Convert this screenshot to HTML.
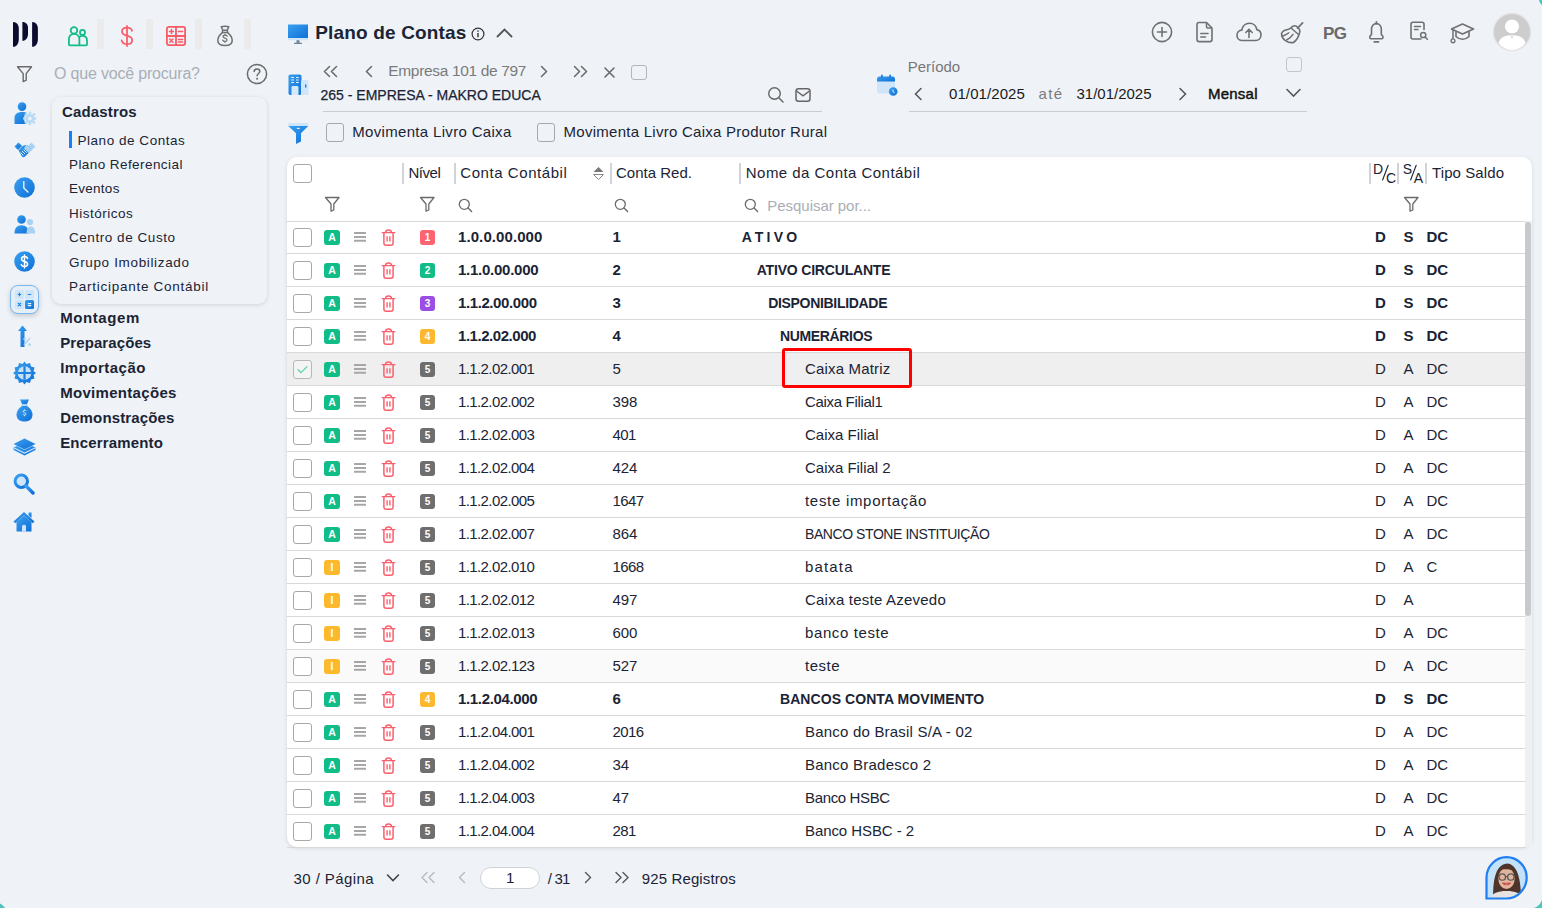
<!DOCTYPE html><html><head><meta charset="utf-8"><style>html,body{margin:0;padding:0}body{width:1542px;height:908px;position:relative;overflow:hidden;background:#eff3f8;font-family:"Liberation Sans",sans-serif;line-height:1;white-space:nowrap}</style></head><body>
<svg style="position:absolute;left:12px;top:21px;" width="27" height="27" viewBox="0 0 27 27"><g fill="#0b0a2f"><path d="M1 1 C5 1 6.8 4 6.8 8 L6.8 18 C6.8 22 5 25.8 1 25.8 Z"/><path d="M10.4 1 C14 1 16 3.5 16 7 L16 13 C16 16.5 14 19.8 10.4 19.8 Z"/><path d="M20.1 1 C24 1 25.9 4 25.9 8 L25.9 18 C25.9 22 24 25.8 20.1 25.8 Z"/></g></svg>
<div style="position:absolute;left:97px;top:19px;width:7px;height:30px;background:#ebebeb"></div>
<div style="position:absolute;left:146px;top:19px;width:7px;height:30px;background:#ebebeb"></div>
<div style="position:absolute;left:195px;top:19px;width:7px;height:30px;background:#ebebeb"></div>
<div style="position:absolute;left:244px;top:19px;width:7px;height:30px;background:#ebebeb"></div>
<svg style="position:absolute;left:66px;top:25px;" width="24" height="22" viewBox="0 0 24 22"><g fill="none" stroke="#14bd86" stroke-width="1.8" stroke-linejoin="round"><circle cx="8" cy="5.4" r="3.3"/><circle cx="16.5" cy="7.4" r="2.5"/><path d="M2.9 19.4 L2.9 14.5 C2.9 11 5 8.9 8 8.9 C11 8.9 13.4 11 13.4 14.5 L13.4 20.3 L4 20.3 C3.3 20.3 2.9 19.9 2.9 19.4 Z"/><path d="M13.4 12 C14 11 15 10.9 16.5 10.9 C19.4 10.9 21 12.7 21 15.5 L21 19.4 C21 19.9 20.6 20.3 20.1 20.3 L13.4 20.3"/></g></svg>
<svg style="position:absolute;left:117px;top:24px;" width="20" height="24" viewBox="0 0 20 24"><g fill="none" stroke="#f7606b" stroke-width="1.8" stroke-linecap="round"><path d="M10 2 L10 22"/><path d="M15 6.8 C14.6 4.8 12.8 3.6 10 3.6 C6.8 3.6 5 5.2 5 7.4 C5 9.8 7 10.8 10 11.6 C13.2 12.4 15.2 13.5 15.2 16.2 C15.2 18.6 13 20.2 10 20.2 C7 20.2 5.2 18.8 4.7 16.4"/></g></svg>
<svg style="position:absolute;left:165px;top:25px;" width="22" height="22" viewBox="0 0 22 22"><g fill="none" stroke="#f85a66" stroke-width="1.8"><rect x="1.9" y="1.9" width="18.2" height="18.2" rx="2"/><path d="M11 1.9 V20.1 M1.9 11 H20.1"/><path d="M4.5 6.4 H8.5 M6.5 4.4 V8.4 M13.4 6.4 H17.6 M13.4 14.4 H17.6 M13.4 17 H17.6 M4.8 14 L8 17.2 M8 14 L4.8 17.2" stroke-width="1.5" stroke-linecap="round"/></g></svg>
<svg style="position:absolute;left:215px;top:25px;" width="20" height="22" viewBox="0 0 20 22"><g fill="none" stroke="#6f6f6f" stroke-width="1.5" stroke-linejoin="round"><path d="M6.2 1.8 C8.5 1.2 11.5 1.2 13.8 1.8 L12.2 5.3 L7.8 5.3 Z"/><path d="M7.6 5.3 L7.4 7.6 L12.6 7.6 L12.4 5.3"/><path d="M7.4 7.6 C4.2 10 2.8 13 2.8 15.6 C2.8 19.3 5.5 20.6 10 20.6 C14.5 20.6 17.2 19.3 17.2 15.6 C17.2 13 15.8 10 12.6 7.6"/><path d="M12.2 11.2 C11.8 10.4 11 10.1 10 10.1 C8.8 10.1 8 10.7 8 11.6 C8 12.6 9 12.9 10 13.2 C11.1 13.5 12 13.9 12 14.9 C12 15.8 11.1 16.4 10 16.4 C8.9 16.4 8.1 15.9 7.8 15.2 M10 9.2 V10.1 M10 16.4 V17.3" stroke-width="1.3" stroke-linecap="round"/></g></svg>
<svg style="position:absolute;left:16px;top:65px;" width="18" height="18" viewBox="0 0 18 18"><path d="M1.5 1.8 H15.5 L10.2 8.6 V15.2 L7.2 16.6 V8.6 Z" fill="none" stroke="#6a6a6a" stroke-width="1.4" stroke-linejoin="round"/></svg>
<div style="position:absolute;left:54px;top:66.00px;font-size:16px;font-weight:400;color:#a9aeb5;letter-spacing:-0.190px;"><span>O que você procura?</span></div>
<svg style="position:absolute;left:246px;top:63px;" width="22" height="22" viewBox="0 0 22 22"><circle cx="11" cy="11" r="9.6" fill="none" stroke="#6a6a6a" stroke-width="1.5"/><path d="M8.2 8.6 C8.2 6.9 9.4 5.9 11 5.9 C12.7 5.9 13.8 6.9 13.8 8.4 C13.8 10.4 11.1 10.6 11.1 12.8" fill="none" stroke="#6a6a6a" stroke-width="1.5" stroke-linecap="round"/><circle cx="11.1" cy="15.8" r="1" fill="#6a6a6a"/></svg>
<div style="position:absolute;left:52px;top:97px;width:215px;height:207px;border-radius:9px;background:#eff3f8;box-shadow:0 1px 4px rgba(0,0,0,0.13)"></div>
<div style="position:absolute;left:62px;top:104.00px;font-size:15px;font-weight:700;color:#1b2434;letter-spacing:0.155px;"><span>Cadastros</span></div>
<div style="position:absolute;left:69px;top:131px;width:3px;height:17px;background:#1a7ef5"></div>
<div style="position:absolute;left:77.5px;top:133.50px;font-size:13.5px;font-weight:400;color:#1b2434;letter-spacing:0.534px;"><span>Plano de Contas</span></div>
<div style="position:absolute;left:69px;top:158.20px;font-size:13.5px;font-weight:400;color:#1b2434;letter-spacing:0.426px;"><span>Plano Referencial</span></div>
<div style="position:absolute;left:69px;top:182.40px;font-size:13.5px;font-weight:400;color:#1b2434;letter-spacing:0.270px;"><span>Eventos</span></div>
<div style="position:absolute;left:69px;top:206.90px;font-size:13.5px;font-weight:400;color:#1b2434;letter-spacing:0.504px;"><span>Históricos</span></div>
<div style="position:absolute;left:69px;top:231.00px;font-size:13.5px;font-weight:400;color:#1b2434;letter-spacing:0.549px;"><span>Centro de Custo</span></div>
<div style="position:absolute;left:69px;top:255.80px;font-size:13.5px;font-weight:400;color:#1b2434;letter-spacing:0.652px;"><span>Grupo Imobilizado</span></div>
<div style="position:absolute;left:69px;top:280.00px;font-size:13.5px;font-weight:400;color:#1b2434;letter-spacing:0.736px;"><span>Participante Contábil</span></div>
<div style="position:absolute;left:60.2px;top:310.20px;font-size:15px;font-weight:700;color:#1b2434;letter-spacing:0.586px;"><span>Montagem</span></div>
<div style="position:absolute;left:60.2px;top:335.30px;font-size:15px;font-weight:700;color:#1b2434;letter-spacing:0.094px;"><span>Preparações</span></div>
<div style="position:absolute;left:60.2px;top:360.00px;font-size:15px;font-weight:700;color:#1b2434;letter-spacing:0.482px;"><span>Importação</span></div>
<div style="position:absolute;left:60.2px;top:384.60px;font-size:15px;font-weight:700;color:#1b2434;letter-spacing:0.304px;"><span>Movimentações</span></div>
<div style="position:absolute;left:60.2px;top:409.70px;font-size:15px;font-weight:700;color:#1b2434;letter-spacing:0.129px;"><span>Demonstrações</span></div>
<div style="position:absolute;left:60.2px;top:434.50px;font-size:15px;font-weight:700;color:#1b2434;letter-spacing:0.166px;"><span>Encerramento</span></div>
<svg width="0" height="0" style="position:absolute"><defs><linearGradient id="bg1" x1="0" y1="0" x2="1" y2="1"><stop offset="0" stop-color="#3aa0f0"/><stop offset="1" stop-color="#0f6fd6"/></linearGradient><linearGradient id="bg2" x1="0" y1="0" x2="1" y2="1"><stop offset="0" stop-color="#cfe6fb"/><stop offset="1" stop-color="#8ec3f0"/></linearGradient></defs></svg>
<svg style="position:absolute;left:14px;top:102px;" width="22" height="23" viewBox="0 0 22 23"><circle cx="8" cy="4.6" r="4.3" fill="url(#bg1)"/><path d="M0.5 22 L0.5 16 C0.5 12 3.5 10 8 10 C10 10 11.6 10.3 12.8 11 C11 12.3 10 14.2 10 16.5 C10 18.8 11 20.8 12.6 22 Z" fill="url(#bg1)"/><rect x="14.8" y="9.6" width="2.4" height="3" transform="rotate(0 16 16.5)" fill="#b9dbf6"/><rect x="14.8" y="9.6" width="2.4" height="3" transform="rotate(45 16 16.5)" fill="#b9dbf6"/><rect x="14.8" y="9.6" width="2.4" height="3" transform="rotate(90 16 16.5)" fill="#b9dbf6"/><rect x="14.8" y="9.6" width="2.4" height="3" transform="rotate(135 16 16.5)" fill="#b9dbf6"/><rect x="14.8" y="9.6" width="2.4" height="3" transform="rotate(180 16 16.5)" fill="#b9dbf6"/><rect x="14.8" y="9.6" width="2.4" height="3" transform="rotate(225 16 16.5)" fill="#b9dbf6"/><rect x="14.8" y="9.6" width="2.4" height="3" transform="rotate(270 16 16.5)" fill="#b9dbf6"/><rect x="14.8" y="9.6" width="2.4" height="3" transform="rotate(315 16 16.5)" fill="#b9dbf6"/><circle cx="16" cy="16.5" r="4.6" fill="#b9dbf6"/><circle cx="16" cy="16.5" r="1.8" fill="#eff3f8"/></svg>
<svg style="position:absolute;left:14px;top:141px;" width="22" height="18" viewBox="0 0 22 18"><path d="M0.5 5.5 L4.5 1.5 L8 5 L4 9 Z" fill="url(#bg1)"/><path d="M17.5 1.5 L21.5 5.5 L18 9 L14 5 Z" fill="#a9d2f5"/><path d="M4.5 9.5 L8.5 5 L12 3.8 L15 5.5 L17.5 9 L11 15.5 C10 16.5 9 16.5 8 15.5 Z" fill="url(#bg1)"/><path d="M12 3.8 L15 5.5 L17.5 9 L14.5 12 L10 7.5 Z" fill="#a9d2f5"/><path d="M6.5 11.5 L9.5 14.5 M8 10 L11 13 M9.6 8.6 L12.6 11.6" stroke="#eff3f8" stroke-width="0.9"/></svg>
<svg style="position:absolute;left:14px;top:177px;" width="21" height="21" viewBox="0 0 21 21"><circle cx="10.5" cy="10.5" r="10.3" fill="url(#bg1)"/><path d="M9.8 4.6 V11 L14 15" fill="none" stroke="#eaf4fd" stroke-width="1.4" stroke-linecap="round"/></svg>
<svg style="position:absolute;left:14px;top:215px;" width="22" height="19" viewBox="0 0 22 19"><circle cx="7.5" cy="4.5" r="4.3" fill="url(#bg1)"/><path d="M0.5 18.5 C0.5 13 3 10.3 7.5 10.3 C12 10.3 14.5 13 14.5 18.5 Z" fill="url(#bg1)"/><circle cx="16" cy="7" r="3.1" fill="#a9d2f5"/><path d="M12.5 18.5 C12.5 14 13.8 11.6 16.5 11.6 C19.6 11.6 21.2 14 21.2 18.5 Z" fill="#a9d2f5"/></svg>
<svg style="position:absolute;left:14px;top:251px;" width="21" height="21" viewBox="0 0 21 21"><circle cx="10.5" cy="10.5" r="10.3" fill="url(#bg1)"/><path d="M10.5 4 V17 M13.6 7.4 C13.2 6.2 12 5.6 10.5 5.6 C8.7 5.6 7.5 6.5 7.5 7.9 C7.5 9.5 8.9 10 10.5 10.4 C12.2 10.8 13.6 11.4 13.6 13 C13.6 14.5 12.3 15.4 10.5 15.4 C8.8 15.4 7.6 14.7 7.3 13.6" fill="none" stroke="#fff" stroke-width="1.5" stroke-linecap="round"/></svg>
<div style="position:absolute;left:10px;top:285px;width:29px;height:29px;border-radius:8px;border:1.3px solid #7ab7ec;box-sizing:border-box;background:#e4eff9;box-shadow:0 2px 5px rgba(0,0,0,0.18)"></div>
<svg style="position:absolute;left:14px;top:289px;" width="21" height="21" viewBox="0 0 21 21"><rect x="1" y="1" width="9" height="9" rx="1.5" fill="#cfe5f9"/><rect x="11" y="1" width="9" height="9" rx="1.5" fill="#cfe5f9"/><rect x="1" y="11" width="9" height="9" rx="1.5" fill="#cfe5f9"/><rect x="11" y="11" width="9" height="9" rx="1.5" fill="url(#bg1)"/><path d="M3.8 5.5 H7.2 M5.5 3.8 V7.2 M13.8 5.5 H17.2 M3.9 13.9 L7.1 17.1 M7.1 13.9 L3.9 17.1 M13.8 14.6 H17.2 M13.8 16.6 H17.2" stroke="#1e80e0" stroke-width="1.2"/><path d="M13.8 14.6 H17.2 M13.8 16.6 H17.2" stroke="#e8f3fd" stroke-width="1.2"/></svg>
<svg style="position:absolute;left:16px;top:325px;" width="16" height="23" viewBox="0 0 16 23"><path d="M6.5 0.5 L11 6 L8.5 6 L8.5 22 L4.5 22 L4.5 6 L2 6 Z" fill="url(#bg1)"/><path d="M8 20 L14 13" stroke="#a9d2f5" stroke-width="1.3"/><circle cx="8.6" cy="14" r="1.3" fill="#a9d2f5"/><circle cx="13.6" cy="19.6" r="1.3" fill="#a9d2f5"/></svg>
<svg style="position:absolute;left:13px;top:361px;" width="23" height="24" viewBox="0 0 23 24"><path d="M11.5 0.5 L13.5 3 L17 2 L18 5.5 L21.5 6.5 L20.5 10 L23 12 L20.5 14 L21.5 17.5 L18 18.5 L17 22 L13.5 21 L11.5 23.5 L9.5 21 L6 22 L5 18.5 L1.5 17.5 L2.5 14 L0 12 L2.5 10 L1.5 6.5 L5 5.5 L6 2 L9.5 3 Z" fill="url(#bg1)"/><circle cx="11.5" cy="12" r="6.8" fill="#c6e1f8"/><path d="M11.5 5.2 V18.8 M4.7 12 H18.3" stroke="#1e80e0" stroke-width="2.2"/></svg>
<svg style="position:absolute;left:16px;top:399px;" width="17" height="23" viewBox="0 0 17 23"><path d="M4 0.5 L13 0.5 L11 5 L6 5 Z" fill="url(#bg1)"/><rect x="5.5" y="5" width="6" height="2" fill="#a9d2f5"/><path d="M6 7 C2 9.5 0.5 13 0.5 15.5 C0.5 20 3.5 22.5 8.5 22.5 C13.5 22.5 16.5 20 16.5 15.5 C16.5 13 15 9.5 11 7 Z" fill="url(#bg1)"/><path d="M10 12.2 C9.7 11.6 9.2 11.4 8.5 11.4 C7.7 11.4 7.1 11.8 7.1 12.5 C7.1 13.3 7.8 13.5 8.5 13.8 C9.3 14 9.9 14.3 9.9 15.1 C9.9 15.8 9.3 16.2 8.5 16.2 C7.8 16.2 7.3 15.9 7 15.3 M8.5 10.5 V11.4 M8.5 16.2 V17.2" fill="none" stroke="#e8f3fd" stroke-width="0.9"/></svg>
<svg style="position:absolute;left:13px;top:438px;" width="23" height="18" viewBox="0 0 23 18"><path d="M11.5 0.5 L22.5 6 L11.5 11.5 L0.5 6 Z" fill="url(#bg1)"/><path d="M0.5 9.5 L4 8 L11.5 12 L19 8 L22.5 9.5 L22.5 12 L11.5 17.5 L0.5 12 Z" fill="url(#bg1)"/><path d="M0.5 9.8 L11.5 15 L22.5 9.8" fill="none" stroke="#c6e1f8" stroke-width="1.2"/></svg>
<svg style="position:absolute;left:13px;top:473px;" width="22" height="22" viewBox="0 0 22 22"><circle cx="8.3" cy="8.3" r="6.2" fill="#cfe5f9" stroke="url(#bg1)" stroke-width="3"/><path d="M13 13 L20 20" stroke="url(#bg1)" stroke-width="3.4" stroke-linecap="round"/></svg>
<svg style="position:absolute;left:13px;top:511px;" width="22" height="21" viewBox="0 0 22 21"><path d="M11 1 L21.5 10.5 L19.8 12.2 L11 4.4 L2.2 12.2 L0.5 10.5 Z" fill="url(#bg1)"/><path d="M15.5 1.5 H18.5 V7 L15.5 4.5 Z" fill="url(#bg1)"/><path d="M3.5 11 L11 4.8 L18.5 11 V20.5 H3.5 Z" fill="url(#bg1)"/><path d="M9 20.5 V15.5 C9 14.5 9.8 13.8 11 13.8 C12.2 13.8 13 14.5 13 15.5 V20.5 Z" fill="#cfe5f9"/></svg>
<svg style="position:absolute;left:287px;top:23px;" width="22" height="22" viewBox="0 0 22 22"><rect x="1" y="1.5" width="20" height="13.5" fill="url(#bg1)"/><rect x="1" y="15" width="20" height="2.3" fill="#cfe5f9"/><path d="M9.5 17.3 H12.5 V19.8 H15 V21 H7 V19.8 H9.5 Z" fill="#6d8599"/></svg>
<div style="position:absolute;left:315.3px;top:23.30px;font-size:19px;font-weight:700;color:#1b2434;letter-spacing:0.153px;"><span>Plano de Contas</span></div>
<svg style="position:absolute;left:471px;top:27px;" width="14" height="14" viewBox="0 0 14 14"><circle cx="7" cy="7" r="5.9" fill="none" stroke="#333" stroke-width="1.2"/><path d="M7 6 V10.3" stroke="#333" stroke-width="1.4"/><circle cx="7" cy="4" r="0.85" fill="#333"/></svg>
<svg style="position:absolute;left:496px;top:27px;" width="17" height="12" viewBox="0 0 17 12"><path d="M1.5 9.5 L8.5 2.5 L15.5 9.5" fill="none" stroke="#555" stroke-width="1.8" stroke-linecap="round"/></svg>
<svg style="position:absolute;left:288px;top:74px;" width="21" height="22" viewBox="0 0 21 22"><rect x="0.5" y="0.5" width="13" height="20.5" rx="1.8" fill="url(#bg1)"/><rect x="13" y="6" width="7.5" height="15" rx="1.5" fill="#cfe5f9"/><path d="M3.5 13.5 C3.5 12.5 4.3 12 5.2 12 H8.8 C9.7 12 10.5 12.5 10.5 13.5 V21 H3.5 Z" fill="#d6e9fa"/><path d="M3.2 3.5 H6 M8 3.5 H10.8 M3.2 6 H6 M8 6 H10.8 M3.2 8.5 H6 M8 8.5 H10.8" stroke="#e6f2fc" stroke-width="1.2"/><rect x="17" y="10.5" width="1.4" height="3" fill="#1e80e0"/></svg>
<svg style="position:absolute;left:322px;top:65px;" width="18" height="13" viewBox="0 0 18 13"><path d="M7.5 1.5 L2.5 6.5 L7.5 11.5 M14.5 1.5 L9.5 6.5 L14.5 11.5" fill="none" stroke="#6a6a6a" stroke-width="1.5" stroke-linecap="round"/></svg>
<svg style="position:absolute;left:363px;top:65px;" width="11" height="13" viewBox="0 0 11 13"><path d="M8.5 1.5 L3.5 6.5 L8.5 11.5" fill="none" stroke="#6a6a6a" stroke-width="1.5" stroke-linecap="round"/></svg>
<div style="position:absolute;left:388.3px;top:63.00px;font-size:15.5px;font-weight:400;color:#7a7a7a;letter-spacing:-0.342px;"><span>Empresa 101 de 797</span></div>
<svg style="position:absolute;left:539px;top:65px;" width="11" height="13" viewBox="0 0 11 13"><path d="M2.5 1.5 L7.5 6.5 L2.5 11.5" fill="none" stroke="#6a6a6a" stroke-width="1.5" stroke-linecap="round"/></svg>
<svg style="position:absolute;left:572px;top:65px;" width="17" height="13" viewBox="0 0 17 13"><path d="M2.5 1.5 L7.5 6.5 L2.5 11.5 M9.5 1.5 L14.5 6.5 L9.5 11.5" fill="none" stroke="#6a6a6a" stroke-width="1.5" stroke-linecap="round"/></svg>
<svg style="position:absolute;left:603px;top:66px;" width="13" height="13" viewBox="0 0 13 13"><path d="M2 2 L11 11 M11 2 L2 11" fill="none" stroke="#6a6a6a" stroke-width="1.6" stroke-linecap="round"/></svg>
<div style="position:absolute;left:631px;top:65px;width:16px;height:15px;border:1.2px solid #b5b5b5;border-radius:3px;box-sizing:border-box"></div>
<div style="position:absolute;left:320.5px;top:88.00px;font-size:14px;font-weight:400;color:#1b2434;letter-spacing:0.005px;-webkit-text-stroke:0.25px #1b2434;"><span>265 - EMPRESA - MAKRO EDUCA</span></div>
<svg style="position:absolute;left:767px;top:86px;" width="18" height="18" viewBox="0 0 18 18"><circle cx="7.5" cy="7.5" r="5.8" fill="none" stroke="#666" stroke-width="1.4"/><path d="M11.8 11.8 L16 16" stroke="#666" stroke-width="1.5" stroke-linecap="round"/></svg>
<svg style="position:absolute;left:794px;top:86px;" width="18" height="18" viewBox="0 0 18 18"><rect x="2" y="2.8" width="14" height="12.5" rx="2.5" fill="none" stroke="#666" stroke-width="1.5"/><path d="M2.5 5 L9 9.8 L15.5 5" fill="none" stroke="#666" stroke-width="1.5"/></svg>
<div style="position:absolute;left:323px;top:111px;width:499px;height:1px;background:#c9cdd2"></div>
<svg style="position:absolute;left:287px;top:121px;" width="23" height="23" viewBox="0 0 23 23"><rect x="1.2" y="2" width="20" height="3" fill="#cfe5f9"/><path d="M1.2 5 H21.2 L14 12.3 V20.5 L9 23 V12.3 Z" fill="url(#bg1)"/><rect x="9.8" y="6.8" width="3" height="1.2" fill="#e6f2fc"/></svg>
<div style="position:absolute;left:326px;top:123px;width:18px;height:19px;border:1.3px solid #a8a8a8;border-radius:3px;box-sizing:border-box"></div>
<div style="position:absolute;left:352.2px;top:124.00px;font-size:15px;font-weight:400;color:#1b2434;letter-spacing:0.327px;"><span>Movimenta Livro Caixa</span></div>
<div style="position:absolute;left:537px;top:123px;width:18px;height:19px;border:1.3px solid #a8a8a8;border-radius:3px;box-sizing:border-box"></div>
<div style="position:absolute;left:563.6px;top:124.00px;font-size:15px;font-weight:400;color:#1b2434;letter-spacing:0.261px;"><span>Movimenta Livro Caixa Produtor Rural</span></div>
<svg style="position:absolute;left:876px;top:74px;" width="22" height="22" viewBox="0 0 22 22"><rect x="1" y="2.5" width="18" height="17" rx="2.5" fill="#cfe5f9"/><path d="M1 5 C1 3.6 2.1 2.5 3.5 2.5 H16.5 C17.9 2.5 19 3.6 19 5 V7.5 H1 Z" fill="url(#bg1)"/><rect x="5" y="0.5" width="1.8" height="4" rx="0.9" fill="#1e80e0"/><rect x="13.2" y="0.5" width="1.8" height="4" rx="0.9" fill="#1e80e0"/><circle cx="17.2" cy="17.5" r="4.3" fill="url(#bg1)"/><path d="M17 15.5 V17.7 L18.6 18.8" stroke="#fff" stroke-width="0.9" fill="none"/></svg>
<div style="position:absolute;left:907.7px;top:59.00px;font-size:15px;font-weight:400;color:#777;letter-spacing:-0.008px;"><span>Período</span></div>
<div style="position:absolute;left:1286px;top:57px;width:16px;height:15px;border:1.2px solid #c5c5c5;border-radius:3px;box-sizing:border-box"></div>
<svg style="position:absolute;left:912px;top:87px;" width="12" height="14" viewBox="0 0 12 14"><path d="M9 1.5 L3.5 7 L9 12.5" fill="none" stroke="#555" stroke-width="1.5" stroke-linecap="round"/></svg>
<div style="position:absolute;left:949px;top:86.00px;font-size:15px;font-weight:400;color:#1a1a1a;letter-spacing:0.091px;"><span>01/01/2025</span></div>
<div style="position:absolute;left:1038.6px;top:86.00px;font-size:15px;font-weight:400;color:#7a7a7a;letter-spacing:1.270px;"><span>até</span></div>
<div style="position:absolute;left:1076.5px;top:86.00px;font-size:15px;font-weight:400;color:#1a1a1a;letter-spacing:-0.009px;"><span>31/01/2025</span></div>
<svg style="position:absolute;left:1177px;top:87px;" width="12" height="14" viewBox="0 0 12 14"><path d="M3 1.5 L8.5 7 L3 12.5" fill="none" stroke="#555" stroke-width="1.5" stroke-linecap="round"/></svg>
<div style="position:absolute;left:1207.9px;top:86.00px;font-size:15px;font-weight:400;color:#111;letter-spacing:0.248px;-webkit-text-stroke:0.45px #111;"><span>Mensal</span></div>
<svg style="position:absolute;left:1285px;top:87px;" width="17" height="12" viewBox="0 0 17 12"><path d="M2 2.5 L8.5 9 L15 2.5" fill="none" stroke="#555" stroke-width="1.6" stroke-linecap="round"/></svg>
<div style="position:absolute;left:909px;top:111px;width:398px;height:1px;background:#c9cdd2"></div>
<svg style="position:absolute;left:1150px;top:20px;" width="24" height="24" viewBox="0 0 24 24"><circle cx="12" cy="12" r="9.6" fill="none" stroke="#707070" stroke-width="1.6"/><path d="M12 7.5 V16.5 M7.5 12 H16.5" stroke="#707070" stroke-width="1.6" stroke-linecap="round"/></svg>
<svg style="position:absolute;left:1194px;top:20px;" width="22" height="24" viewBox="0 0 22 24"><path d="M5 2.5 H12.5 L18 8 V19.5 C18 20.8 17 21.6 15.8 21.6 H5.2 C4 21.6 3 20.8 3 19.5 V4.6 C3 3.3 4 2.5 5 2.5 Z" fill="none" stroke="#707070" stroke-width="1.6" stroke-linejoin="round"/><path d="M12.5 2.5 V6.8 C12.5 7.5 13 8 13.7 8 H18" fill="none" stroke="#707070" stroke-width="1.5"/><path d="M6.8 13.5 H14 M6.8 17 H11.5" stroke="#707070" stroke-width="1.6" stroke-linecap="round"/></svg>
<svg style="position:absolute;left:1235px;top:20px;" width="28" height="24" viewBox="0 0 28 24"><path d="M7.5 20.5 C4 20.5 2 18 2 15.2 C2 12.3 4.2 10.2 6.8 10.1 C7.5 6.2 10.5 3.2 14.5 3.2 C18.5 3.2 21.3 6 21.8 9.6 C24.3 10 26 12.2 26 15 C26 18.1 23.8 20.5 20.6 20.5 Z" fill="none" stroke="#707070" stroke-width="1.6"/><path d="M14 17.5 V9.5 M10.8 12.5 L14 9.3 L17.2 12.5" fill="none" stroke="#707070" stroke-width="1.6" stroke-linecap="round"/></svg>
<svg style="position:absolute;left:1279px;top:20px;" width="27" height="25" viewBox="0 0 27 25"><path d="M18.6 8.2 L23.6 2.9" stroke="#707070" stroke-width="1.7" stroke-linecap="round"/><path d="M2.5 13.5 C3.2 11.2 5.5 10 9.5 9.2 C11 8.6 12.5 7.2 14 6.2 C15.5 5.4 17 5.8 18.2 7 L20.3 9.2 C21 10.2 21 11.5 20.5 13 C19.6 17 17.5 20.2 14.6 22.5 C12 23 8.5 22 6 20.3 C4 18.8 2.6 16.5 2.5 13.5 Z" fill="none" stroke="#707070" stroke-width="1.6" stroke-linejoin="round"/><path d="M11.7 7.7 L19.8 14.8" stroke="#707070" stroke-width="1.5"/><path d="M3.3 16.2 C5.5 15.5 7.8 14.5 9.8 12.8 M7.6 20 C10.2 18.6 12.5 16.6 14 14.3" fill="none" stroke="#707070" stroke-width="1.5" stroke-linecap="round"/></svg>
<div style="position:absolute;left:1323px;top:24.90px;font-size:17px;font-weight:700;color:#6a6a6a;letter-spacing:-0.562px;"><span>PG</span></div>
<svg style="position:absolute;left:1366px;top:20px;" width="22" height="25" viewBox="0 0 22 25"><path d="M5.5 14.5 V9.3 C5.5 6 7.5 3.6 10.4 3.6 C13.3 3.6 15.3 6 15.3 9.3 V14.5 L16.6 15.9 C17.5 17 17 18.8 15.6 18.8 H5.2 C3.8 18.8 3.3 17 4.2 15.9 Z" fill="none" stroke="#707070" stroke-width="1.6" stroke-linejoin="round"/><path d="M10.4 1.8 V3.6 M8.3 21.9 H12.5" stroke="#707070" stroke-width="1.7" stroke-linecap="round"/></svg>
<svg style="position:absolute;left:1408px;top:20px;" width="22" height="22" viewBox="0 0 22 22"><path d="M13.5 19 H5 C3.8 19 3 18.2 3 17 V4.2 C3 3 3.8 2.2 5 2.2 H14 C15.2 2.2 16 3 16 4.2 V10" fill="none" stroke="#707070" stroke-width="1.6"/><path d="M6.5 6.5 H12.5 M6.5 9.5 H10" stroke="#707070" stroke-width="1.5" stroke-linecap="round"/><circle cx="15.2" cy="15" r="2.6" fill="none" stroke="#707070" stroke-width="1.5"/><path d="M17.2 17 L19.3 19.2" stroke="#707070" stroke-width="1.6" stroke-linecap="round"/></svg>
<svg style="position:absolute;left:1450px;top:21px;" width="25" height="23" viewBox="0 0 25 23"><path d="M12.5 3 L23.5 8 L12.5 13 L1.5 8 Z" fill="none" stroke="#707070" stroke-width="1.6" stroke-linejoin="round"/><path d="M6 10.2 V15.5 C8 17.5 10.3 18.3 12.5 18.3 C14.7 18.3 17 17.5 19 15.5 V10.2" fill="none" stroke="#707070" stroke-width="1.6"/><path d="M3 8.6 V18" stroke="#707070" stroke-width="1.5"/><circle cx="3" cy="19.8" r="1.9" fill="none" stroke="#707070" stroke-width="1.4"/></svg>
<svg style="position:absolute;left:1492px;top:12px;" width="40" height="40" viewBox="0 0 40 40"><circle cx="20" cy="20" r="19.5" fill="#e6e6e6"/><circle cx="20" cy="20" r="18" fill="#cdcdcd"/><circle cx="20" cy="14.5" r="7" fill="#fff"/><path d="M6.5 31 C8 25.5 12.5 23.2 20 23.2 C27.5 23.2 32 25.5 33.5 31 C30.5 35.3 25.5 38 20 38 C14.5 38 9.5 35.3 6.5 31 Z" fill="#fff"/><path d="M19 23.5 L20 27.5 L21 23.5 Z" fill="#cdcdcd"/></svg>
<div style="position:absolute;left:287px;top:157px;width:1245px;height:690px;background:#fff;border-radius:10px;box-shadow:0 1px 4px rgba(0,0,0,0.12);overflow:hidden">
</div>
<div style="position:absolute;left:293px;top:164px;width:19px;height:19px;border:1.3px solid #a8a8a8;border-radius:3px;box-sizing:border-box;background:#fff"></div>
<div style="position:absolute;left:402px;top:163px;width:2px;height:21px;background:#d0d4da"></div>
<div style="position:absolute;left:454px;top:163px;width:2px;height:21px;background:#d0d4da"></div>
<div style="position:absolute;left:610px;top:163px;width:2px;height:21px;background:#d0d4da"></div>
<div style="position:absolute;left:739px;top:163px;width:2px;height:21px;background:#d0d4da"></div>
<div style="position:absolute;left:1369px;top:163px;width:2px;height:21px;background:#d0d4da"></div>
<div style="position:absolute;left:1397px;top:163px;width:2px;height:21px;background:#d0d4da"></div>
<div style="position:absolute;left:1425px;top:163px;width:2px;height:21px;background:#d0d4da"></div>
<div style="position:absolute;left:408.4px;top:165.00px;font-size:15px;font-weight:400;color:#1b2434;letter-spacing:-0.447px;"><span>Nível</span></div>
<div style="position:absolute;left:460.3px;top:165.00px;font-size:15px;font-weight:400;color:#1b2434;letter-spacing:0.559px;"><span>Conta Contábil</span></div>
<svg style="position:absolute;left:592px;top:166px;" width="13" height="15" viewBox="0 0 13 15"><path d="M6.5 1 L11.5 6 H1.5 Z" fill="#777"/><path d="M1.5 8.5 H11.5 L6.5 13.5 Z" fill="none" stroke="#888" stroke-width="1"/></svg>
<div style="position:absolute;left:616px;top:165.00px;font-size:15px;font-weight:400;color:#1b2434;letter-spacing:0.012px;"><span>Conta Red.</span></div>
<div style="position:absolute;left:745.8px;top:165.00px;font-size:15px;font-weight:400;color:#1b2434;letter-spacing:0.464px;"><span>Nome da Conta Contábil</span></div>
<div style="position:absolute;left:1432px;top:165.00px;font-size:15px;font-weight:400;color:#1b2434;letter-spacing:0.094px;"><span>Tipo Saldo</span></div>
<div style="position:absolute;left:1373px;top:162.00px;font-size:14px;font-weight:400;color:#1b2434;"><span>D</span></div>
<div style="position:absolute;left:1386px;top:171.00px;font-size:14px;font-weight:400;color:#1b2434;"><span>C</span></div>
<div style="position:absolute;left:1402.8px;top:162.00px;font-size:14px;font-weight:400;color:#1b2434;"><span>S</span></div>
<div style="position:absolute;left:1413.8px;top:171.00px;font-size:14px;font-weight:400;color:#1b2434;"><span>A</span></div>
<svg style="position:absolute;left:1380px;top:163px;" width="40" height="19" viewBox="0 0 40 19"><path d="M2.6 17 L8.2 2.2 M30.6 17 L36.2 2.2" stroke="#1b2434" stroke-width="1.1" stroke-linecap="round"/></svg>
<svg style="position:absolute;left:323.5px;top:196px;" width="17" height="17" viewBox="0 0 17 17"><path d="M1.5 1.5 H15 L9.8 8 V14 L7 15.2 V8 Z" fill="none" stroke="#6a6a6a" stroke-width="1.3" stroke-linejoin="round"/></svg>
<svg style="position:absolute;left:419px;top:196px;" width="17" height="17" viewBox="0 0 17 17"><path d="M1.5 1.5 H15 L9.8 8 V14 L7 15.2 V8 Z" fill="none" stroke="#6a6a6a" stroke-width="1.3" stroke-linejoin="round"/></svg>
<svg style="position:absolute;left:1402.5px;top:196px;" width="17" height="17" viewBox="0 0 17 17"><path d="M1.5 1.5 H15 L9.8 8 V14 L7 15.2 V8 Z" fill="none" stroke="#6a6a6a" stroke-width="1.3" stroke-linejoin="round"/></svg>
<svg style="position:absolute;left:457.5px;top:198px;" width="15" height="15" viewBox="0 0 15 15"><circle cx="6.3" cy="6.3" r="5" fill="none" stroke="#6a6a6a" stroke-width="1.3"/><path d="M10 10 L13.6 13.6" stroke="#6a6a6a" stroke-width="1.4" stroke-linecap="round"/></svg>
<svg style="position:absolute;left:613.5px;top:198px;" width="15" height="15" viewBox="0 0 15 15"><circle cx="6.3" cy="6.3" r="5" fill="none" stroke="#6a6a6a" stroke-width="1.3"/><path d="M10 10 L13.6 13.6" stroke="#6a6a6a" stroke-width="1.4" stroke-linecap="round"/></svg>
<svg style="position:absolute;left:743.5px;top:198px;" width="15" height="15" viewBox="0 0 15 15"><circle cx="6.3" cy="6.3" r="5" fill="none" stroke="#6a6a6a" stroke-width="1.3"/><path d="M10 10 L13.6 13.6" stroke="#6a6a6a" stroke-width="1.4" stroke-linecap="round"/></svg>
<div style="position:absolute;left:767.3px;top:197.80px;font-size:15px;font-weight:400;color:#a9aeb5;letter-spacing:-0.036px;"><span>Pesquisar por...</span></div>
<div style="position:absolute;left:287px;top:221px;width:1245px;height:1px;background:#d9d9d9"></div>
<div style="position:absolute;left:287px;top:253px;width:1238px;height:1px;background:#d9d9d9"></div>
<div style="position:absolute;left:293px;top:228px;width:19px;height:19px;border:1.3px solid #a8a8a8;border-radius:3px;box-sizing:border-box;background:#fff"></div>
<div style="position:absolute;left:324px;top:230px;width:16px;height:15px;border-radius:3px;background:#10bd87;color:#fff;font:700 10.5px/15px 'Liberation Sans',sans-serif;text-align:center">A</div>
<svg style="position:absolute;left:354px;top:231px;" width="12" height="12" viewBox="0 0 12 12"><path d="M0 2 H12 M0 5.9 H12 M0 9.8 H12" stroke="#a6a6a6" stroke-width="2"/></svg>
<svg style="position:absolute;left:381px;top:228.5px;" width="15" height="18" viewBox="0 0 15 18"><path d="M1.2 3.6 H13.8" stroke="#fb5f6c" stroke-width="1.4" stroke-linecap="round"/><path d="M4.4 3.4 C4.6 1.8 5.8 1 7.5 1 C9.2 1 10.4 1.8 10.6 3.4" fill="none" stroke="#fb5f6c" stroke-width="1.4"/><path d="M2.9 3.8 V14 C2.9 15.5 3.9 16.3 5.2 16.3 H9.8 C11.1 16.3 12.1 15.5 12.1 14 V3.8" fill="none" stroke="#fb5f6c" stroke-width="1.5"/><path d="M6.1 7.2 V12.4 M8.9 7.2 V12.4" stroke="#fb5f6c" stroke-width="1.4"/></svg>
<div style="position:absolute;left:420px;top:230px;width:15px;height:15px;border-radius:3px;background:#fd6370;color:#fff;font:700 10px/15px 'Liberation Sans',sans-serif;text-align:center">1</div>
<div style="position:absolute;left:458px;top:229.00px;font-size:15px;font-weight:700;color:#1b2434;letter-spacing:0.089px;"><span>1.0.0.00.000</span></div>
<div style="position:absolute;left:612.5px;top:229.00px;font-size:15px;font-weight:700;color:#1b2434;"><span>1</span></div>
<div style="position:absolute;left:741.8px;top:230.00px;font-size:14px;font-weight:700;color:#1b2434;letter-spacing:-0.304px;"><span>A T I V O</span></div>
<div style="position:absolute;left:1375px;top:229.00px;font-size:15px;font-weight:700;color:#1b2434;"><span>D</span></div>
<div style="position:absolute;left:1403.5px;top:229.00px;font-size:15px;font-weight:700;color:#1b2434;"><span>S</span></div>
<div style="position:absolute;left:1426.5px;top:229.00px;font-size:15px;font-weight:700;color:#1b2434;"><span>DC</span></div>
<div style="position:absolute;left:287px;top:286px;width:1238px;height:1px;background:#d9d9d9"></div>
<div style="position:absolute;left:293px;top:261px;width:19px;height:19px;border:1.3px solid #a8a8a8;border-radius:3px;box-sizing:border-box;background:#fff"></div>
<div style="position:absolute;left:324px;top:263px;width:16px;height:15px;border-radius:3px;background:#10bd87;color:#fff;font:700 10.5px/15px 'Liberation Sans',sans-serif;text-align:center">A</div>
<svg style="position:absolute;left:354px;top:264px;" width="12" height="12" viewBox="0 0 12 12"><path d="M0 2 H12 M0 5.9 H12 M0 9.8 H12" stroke="#a6a6a6" stroke-width="2"/></svg>
<svg style="position:absolute;left:381px;top:261.5px;" width="15" height="18" viewBox="0 0 15 18"><path d="M1.2 3.6 H13.8" stroke="#fb5f6c" stroke-width="1.4" stroke-linecap="round"/><path d="M4.4 3.4 C4.6 1.8 5.8 1 7.5 1 C9.2 1 10.4 1.8 10.6 3.4" fill="none" stroke="#fb5f6c" stroke-width="1.4"/><path d="M2.9 3.8 V14 C2.9 15.5 3.9 16.3 5.2 16.3 H9.8 C11.1 16.3 12.1 15.5 12.1 14 V3.8" fill="none" stroke="#fb5f6c" stroke-width="1.5"/><path d="M6.1 7.2 V12.4 M8.9 7.2 V12.4" stroke="#fb5f6c" stroke-width="1.4"/></svg>
<div style="position:absolute;left:420px;top:263px;width:15px;height:15px;border-radius:3px;background:#10bd87;color:#fff;font:700 10px/15px 'Liberation Sans',sans-serif;text-align:center">2</div>
<div style="position:absolute;left:458px;top:262.00px;font-size:15px;font-weight:700;color:#1b2434;letter-spacing:-0.257px;"><span>1.1.0.00.000</span></div>
<div style="position:absolute;left:612.5px;top:262.00px;font-size:15px;font-weight:700;color:#1b2434;"><span>2</span></div>
<div style="position:absolute;left:756.7px;top:263.00px;font-size:14px;font-weight:700;color:#1b2434;letter-spacing:-0.182px;"><span>ATIVO CIRCULANTE</span></div>
<div style="position:absolute;left:1375px;top:262.00px;font-size:15px;font-weight:700;color:#1b2434;"><span>D</span></div>
<div style="position:absolute;left:1403.5px;top:262.00px;font-size:15px;font-weight:700;color:#1b2434;"><span>S</span></div>
<div style="position:absolute;left:1426.5px;top:262.00px;font-size:15px;font-weight:700;color:#1b2434;"><span>DC</span></div>
<div style="position:absolute;left:287px;top:319px;width:1238px;height:1px;background:#d9d9d9"></div>
<div style="position:absolute;left:293px;top:294px;width:19px;height:19px;border:1.3px solid #a8a8a8;border-radius:3px;box-sizing:border-box;background:#fff"></div>
<div style="position:absolute;left:324px;top:296px;width:16px;height:15px;border-radius:3px;background:#10bd87;color:#fff;font:700 10.5px/15px 'Liberation Sans',sans-serif;text-align:center">A</div>
<svg style="position:absolute;left:354px;top:297px;" width="12" height="12" viewBox="0 0 12 12"><path d="M0 2 H12 M0 5.9 H12 M0 9.8 H12" stroke="#a6a6a6" stroke-width="2"/></svg>
<svg style="position:absolute;left:381px;top:294.5px;" width="15" height="18" viewBox="0 0 15 18"><path d="M1.2 3.6 H13.8" stroke="#fb5f6c" stroke-width="1.4" stroke-linecap="round"/><path d="M4.4 3.4 C4.6 1.8 5.8 1 7.5 1 C9.2 1 10.4 1.8 10.6 3.4" fill="none" stroke="#fb5f6c" stroke-width="1.4"/><path d="M2.9 3.8 V14 C2.9 15.5 3.9 16.3 5.2 16.3 H9.8 C11.1 16.3 12.1 15.5 12.1 14 V3.8" fill="none" stroke="#fb5f6c" stroke-width="1.5"/><path d="M6.1 7.2 V12.4 M8.9 7.2 V12.4" stroke="#fb5f6c" stroke-width="1.4"/></svg>
<div style="position:absolute;left:420px;top:296px;width:15px;height:15px;border-radius:3px;background:#9b4ee6;color:#fff;font:700 10px/15px 'Liberation Sans',sans-serif;text-align:center">3</div>
<div style="position:absolute;left:458px;top:295.00px;font-size:15px;font-weight:700;color:#1b2434;letter-spacing:-0.402px;"><span>1.1.2.00.000</span></div>
<div style="position:absolute;left:612.5px;top:295.00px;font-size:15px;font-weight:700;color:#1b2434;"><span>3</span></div>
<div style="position:absolute;left:768.2px;top:296.00px;font-size:14px;font-weight:700;color:#1b2434;letter-spacing:-0.313px;"><span>DISPONIBILIDADE</span></div>
<div style="position:absolute;left:1375px;top:295.00px;font-size:15px;font-weight:700;color:#1b2434;"><span>D</span></div>
<div style="position:absolute;left:1403.5px;top:295.00px;font-size:15px;font-weight:700;color:#1b2434;"><span>S</span></div>
<div style="position:absolute;left:1426.5px;top:295.00px;font-size:15px;font-weight:700;color:#1b2434;"><span>DC</span></div>
<div style="position:absolute;left:287px;top:352px;width:1238px;height:1px;background:#d9d9d9"></div>
<div style="position:absolute;left:293px;top:327px;width:19px;height:19px;border:1.3px solid #a8a8a8;border-radius:3px;box-sizing:border-box;background:#fff"></div>
<div style="position:absolute;left:324px;top:329px;width:16px;height:15px;border-radius:3px;background:#10bd87;color:#fff;font:700 10.5px/15px 'Liberation Sans',sans-serif;text-align:center">A</div>
<svg style="position:absolute;left:354px;top:330px;" width="12" height="12" viewBox="0 0 12 12"><path d="M0 2 H12 M0 5.9 H12 M0 9.8 H12" stroke="#a6a6a6" stroke-width="2"/></svg>
<svg style="position:absolute;left:381px;top:327.5px;" width="15" height="18" viewBox="0 0 15 18"><path d="M1.2 3.6 H13.8" stroke="#fb5f6c" stroke-width="1.4" stroke-linecap="round"/><path d="M4.4 3.4 C4.6 1.8 5.8 1 7.5 1 C9.2 1 10.4 1.8 10.6 3.4" fill="none" stroke="#fb5f6c" stroke-width="1.4"/><path d="M2.9 3.8 V14 C2.9 15.5 3.9 16.3 5.2 16.3 H9.8 C11.1 16.3 12.1 15.5 12.1 14 V3.8" fill="none" stroke="#fb5f6c" stroke-width="1.5"/><path d="M6.1 7.2 V12.4 M8.9 7.2 V12.4" stroke="#fb5f6c" stroke-width="1.4"/></svg>
<div style="position:absolute;left:420px;top:329px;width:15px;height:15px;border-radius:3px;background:#fcb82e;color:#fff;font:700 10px/15px 'Liberation Sans',sans-serif;text-align:center">4</div>
<div style="position:absolute;left:458px;top:328.00px;font-size:15px;font-weight:700;color:#1b2434;letter-spacing:-0.457px;"><span>1.1.2.02.000</span></div>
<div style="position:absolute;left:612.5px;top:328.00px;font-size:15px;font-weight:700;color:#1b2434;"><span>4</span></div>
<div style="position:absolute;left:780px;top:329.00px;font-size:14px;font-weight:700;color:#1b2434;letter-spacing:-0.352px;"><span>NUMERÁRIOS</span></div>
<div style="position:absolute;left:1375px;top:328.00px;font-size:15px;font-weight:700;color:#1b2434;"><span>D</span></div>
<div style="position:absolute;left:1403.5px;top:328.00px;font-size:15px;font-weight:700;color:#1b2434;"><span>S</span></div>
<div style="position:absolute;left:1426.5px;top:328.00px;font-size:15px;font-weight:700;color:#1b2434;"><span>DC</span></div>
<div style="position:absolute;left:287px;top:353px;width:1238px;height:32px;background:#efefef"></div>
<div style="position:absolute;left:287px;top:385px;width:1238px;height:1px;background:#d9d9d9"></div>
<div style="position:absolute;left:293px;top:360px;width:19px;height:19px;border:1.3px solid #b8b8b8;border-radius:3px;box-sizing:border-box;background:#f4f4f4"></div>
<svg style="position:absolute;left:296px;top:363px;" width="13" height="13" viewBox="0 0 13 13"><path d="M2 6.8 L5 9.6 L11 3.6" fill="none" stroke="#5fd0a8" stroke-width="1.3" stroke-linecap="round"/></svg>
<div style="position:absolute;left:324px;top:362px;width:16px;height:15px;border-radius:3px;background:#10bd87;color:#fff;font:700 10.5px/15px 'Liberation Sans',sans-serif;text-align:center">A</div>
<svg style="position:absolute;left:354px;top:363px;" width="12" height="12" viewBox="0 0 12 12"><path d="M0 2 H12 M0 5.9 H12 M0 9.8 H12" stroke="#a6a6a6" stroke-width="2"/></svg>
<svg style="position:absolute;left:381px;top:360.5px;" width="15" height="18" viewBox="0 0 15 18"><path d="M1.2 3.6 H13.8" stroke="#fb5f6c" stroke-width="1.4" stroke-linecap="round"/><path d="M4.4 3.4 C4.6 1.8 5.8 1 7.5 1 C9.2 1 10.4 1.8 10.6 3.4" fill="none" stroke="#fb5f6c" stroke-width="1.4"/><path d="M2.9 3.8 V14 C2.9 15.5 3.9 16.3 5.2 16.3 H9.8 C11.1 16.3 12.1 15.5 12.1 14 V3.8" fill="none" stroke="#fb5f6c" stroke-width="1.5"/><path d="M6.1 7.2 V12.4 M8.9 7.2 V12.4" stroke="#fb5f6c" stroke-width="1.4"/></svg>
<div style="position:absolute;left:420px;top:362px;width:15px;height:15px;border-radius:3px;background:#6e6e6e;color:#fff;font:700 10px/15px 'Liberation Sans',sans-serif;text-align:center">5</div>
<div style="position:absolute;left:458px;top:361.00px;font-size:15px;font-weight:400;color:#1b2434;letter-spacing:-0.600px;"><span>1.1.2.02.001</span></div>
<div style="position:absolute;left:612.5px;top:361.00px;font-size:15px;font-weight:400;color:#1b2434;"><span>5</span></div>
<div style="position:absolute;left:805px;top:361.00px;font-size:15px;font-weight:400;color:#1b2434;letter-spacing:0.176px;"><span>Caixa Matriz</span></div>
<div style="position:absolute;left:1375px;top:361.00px;font-size:15px;font-weight:400;color:#1b2434;"><span>D</span></div>
<div style="position:absolute;left:1403.5px;top:361.00px;font-size:15px;font-weight:400;color:#1b2434;"><span>A</span></div>
<div style="position:absolute;left:1426.5px;top:361.00px;font-size:15px;font-weight:400;color:#1b2434;"><span>DC</span></div>
<div style="position:absolute;left:287px;top:418px;width:1238px;height:1px;background:#d9d9d9"></div>
<div style="position:absolute;left:293px;top:393px;width:19px;height:19px;border:1.3px solid #a8a8a8;border-radius:3px;box-sizing:border-box;background:#fff"></div>
<div style="position:absolute;left:324px;top:395px;width:16px;height:15px;border-radius:3px;background:#10bd87;color:#fff;font:700 10.5px/15px 'Liberation Sans',sans-serif;text-align:center">A</div>
<svg style="position:absolute;left:354px;top:396px;" width="12" height="12" viewBox="0 0 12 12"><path d="M0 2 H12 M0 5.9 H12 M0 9.8 H12" stroke="#a6a6a6" stroke-width="2"/></svg>
<svg style="position:absolute;left:381px;top:393.5px;" width="15" height="18" viewBox="0 0 15 18"><path d="M1.2 3.6 H13.8" stroke="#fb5f6c" stroke-width="1.4" stroke-linecap="round"/><path d="M4.4 3.4 C4.6 1.8 5.8 1 7.5 1 C9.2 1 10.4 1.8 10.6 3.4" fill="none" stroke="#fb5f6c" stroke-width="1.4"/><path d="M2.9 3.8 V14 C2.9 15.5 3.9 16.3 5.2 16.3 H9.8 C11.1 16.3 12.1 15.5 12.1 14 V3.8" fill="none" stroke="#fb5f6c" stroke-width="1.5"/><path d="M6.1 7.2 V12.4 M8.9 7.2 V12.4" stroke="#fb5f6c" stroke-width="1.4"/></svg>
<div style="position:absolute;left:420px;top:395px;width:15px;height:15px;border-radius:3px;background:#6e6e6e;color:#fff;font:700 10px/15px 'Liberation Sans',sans-serif;text-align:center">5</div>
<div style="position:absolute;left:458px;top:394.00px;font-size:15px;font-weight:400;color:#1b2434;letter-spacing:-0.600px;"><span>1.1.2.02.002</span></div>
<div style="position:absolute;left:612.5px;top:394.00px;font-size:15px;font-weight:400;color:#1b2434;letter-spacing:-0.066px;"><span>398</span></div>
<div style="position:absolute;left:805px;top:394.00px;font-size:15px;font-weight:400;color:#1b2434;letter-spacing:-0.325px;"><span>Caixa Filial1</span></div>
<div style="position:absolute;left:1375px;top:394.00px;font-size:15px;font-weight:400;color:#1b2434;"><span>D</span></div>
<div style="position:absolute;left:1403.5px;top:394.00px;font-size:15px;font-weight:400;color:#1b2434;"><span>A</span></div>
<div style="position:absolute;left:1426.5px;top:394.00px;font-size:15px;font-weight:400;color:#1b2434;"><span>DC</span></div>
<div style="position:absolute;left:287px;top:451px;width:1238px;height:1px;background:#d9d9d9"></div>
<div style="position:absolute;left:293px;top:426px;width:19px;height:19px;border:1.3px solid #a8a8a8;border-radius:3px;box-sizing:border-box;background:#fff"></div>
<div style="position:absolute;left:324px;top:428px;width:16px;height:15px;border-radius:3px;background:#10bd87;color:#fff;font:700 10.5px/15px 'Liberation Sans',sans-serif;text-align:center">A</div>
<svg style="position:absolute;left:354px;top:429px;" width="12" height="12" viewBox="0 0 12 12"><path d="M0 2 H12 M0 5.9 H12 M0 9.8 H12" stroke="#a6a6a6" stroke-width="2"/></svg>
<svg style="position:absolute;left:381px;top:426.5px;" width="15" height="18" viewBox="0 0 15 18"><path d="M1.2 3.6 H13.8" stroke="#fb5f6c" stroke-width="1.4" stroke-linecap="round"/><path d="M4.4 3.4 C4.6 1.8 5.8 1 7.5 1 C9.2 1 10.4 1.8 10.6 3.4" fill="none" stroke="#fb5f6c" stroke-width="1.4"/><path d="M2.9 3.8 V14 C2.9 15.5 3.9 16.3 5.2 16.3 H9.8 C11.1 16.3 12.1 15.5 12.1 14 V3.8" fill="none" stroke="#fb5f6c" stroke-width="1.5"/><path d="M6.1 7.2 V12.4 M8.9 7.2 V12.4" stroke="#fb5f6c" stroke-width="1.4"/></svg>
<div style="position:absolute;left:420px;top:428px;width:15px;height:15px;border-radius:3px;background:#6e6e6e;color:#fff;font:700 10px/15px 'Liberation Sans',sans-serif;text-align:center">5</div>
<div style="position:absolute;left:458px;top:427.00px;font-size:15px;font-weight:400;color:#1b2434;letter-spacing:-0.600px;"><span>1.1.2.02.003</span></div>
<div style="position:absolute;left:612.5px;top:427.00px;font-size:15px;font-weight:400;color:#1b2434;letter-spacing:-0.600px;"><span>401</span></div>
<div style="position:absolute;left:805px;top:427.00px;font-size:15px;font-weight:400;color:#1b2434;letter-spacing:0.013px;"><span>Caixa Filial</span></div>
<div style="position:absolute;left:1375px;top:427.00px;font-size:15px;font-weight:400;color:#1b2434;"><span>D</span></div>
<div style="position:absolute;left:1403.5px;top:427.00px;font-size:15px;font-weight:400;color:#1b2434;"><span>A</span></div>
<div style="position:absolute;left:1426.5px;top:427.00px;font-size:15px;font-weight:400;color:#1b2434;"><span>DC</span></div>
<div style="position:absolute;left:287px;top:484px;width:1238px;height:1px;background:#d9d9d9"></div>
<div style="position:absolute;left:293px;top:459px;width:19px;height:19px;border:1.3px solid #a8a8a8;border-radius:3px;box-sizing:border-box;background:#fff"></div>
<div style="position:absolute;left:324px;top:461px;width:16px;height:15px;border-radius:3px;background:#10bd87;color:#fff;font:700 10.5px/15px 'Liberation Sans',sans-serif;text-align:center">A</div>
<svg style="position:absolute;left:354px;top:462px;" width="12" height="12" viewBox="0 0 12 12"><path d="M0 2 H12 M0 5.9 H12 M0 9.8 H12" stroke="#a6a6a6" stroke-width="2"/></svg>
<svg style="position:absolute;left:381px;top:459.5px;" width="15" height="18" viewBox="0 0 15 18"><path d="M1.2 3.6 H13.8" stroke="#fb5f6c" stroke-width="1.4" stroke-linecap="round"/><path d="M4.4 3.4 C4.6 1.8 5.8 1 7.5 1 C9.2 1 10.4 1.8 10.6 3.4" fill="none" stroke="#fb5f6c" stroke-width="1.4"/><path d="M2.9 3.8 V14 C2.9 15.5 3.9 16.3 5.2 16.3 H9.8 C11.1 16.3 12.1 15.5 12.1 14 V3.8" fill="none" stroke="#fb5f6c" stroke-width="1.5"/><path d="M6.1 7.2 V12.4 M8.9 7.2 V12.4" stroke="#fb5f6c" stroke-width="1.4"/></svg>
<div style="position:absolute;left:420px;top:461px;width:15px;height:15px;border-radius:3px;background:#6e6e6e;color:#fff;font:700 10px/15px 'Liberation Sans',sans-serif;text-align:center">5</div>
<div style="position:absolute;left:458px;top:460.00px;font-size:15px;font-weight:400;color:#1b2434;letter-spacing:-0.600px;"><span>1.1.2.02.004</span></div>
<div style="position:absolute;left:612.5px;top:460.00px;font-size:15px;font-weight:400;color:#1b2434;letter-spacing:-0.066px;"><span>424</span></div>
<div style="position:absolute;left:805px;top:460.00px;font-size:15px;font-weight:400;color:#1b2434;letter-spacing:-0.021px;"><span>Caixa Filial 2</span></div>
<div style="position:absolute;left:1375px;top:460.00px;font-size:15px;font-weight:400;color:#1b2434;"><span>D</span></div>
<div style="position:absolute;left:1403.5px;top:460.00px;font-size:15px;font-weight:400;color:#1b2434;"><span>A</span></div>
<div style="position:absolute;left:1426.5px;top:460.00px;font-size:15px;font-weight:400;color:#1b2434;"><span>DC</span></div>
<div style="position:absolute;left:287px;top:517px;width:1238px;height:1px;background:#d9d9d9"></div>
<div style="position:absolute;left:293px;top:492px;width:19px;height:19px;border:1.3px solid #a8a8a8;border-radius:3px;box-sizing:border-box;background:#fff"></div>
<div style="position:absolute;left:324px;top:494px;width:16px;height:15px;border-radius:3px;background:#10bd87;color:#fff;font:700 10.5px/15px 'Liberation Sans',sans-serif;text-align:center">A</div>
<svg style="position:absolute;left:354px;top:495px;" width="12" height="12" viewBox="0 0 12 12"><path d="M0 2 H12 M0 5.9 H12 M0 9.8 H12" stroke="#a6a6a6" stroke-width="2"/></svg>
<svg style="position:absolute;left:381px;top:492.5px;" width="15" height="18" viewBox="0 0 15 18"><path d="M1.2 3.6 H13.8" stroke="#fb5f6c" stroke-width="1.4" stroke-linecap="round"/><path d="M4.4 3.4 C4.6 1.8 5.8 1 7.5 1 C9.2 1 10.4 1.8 10.6 3.4" fill="none" stroke="#fb5f6c" stroke-width="1.4"/><path d="M2.9 3.8 V14 C2.9 15.5 3.9 16.3 5.2 16.3 H9.8 C11.1 16.3 12.1 15.5 12.1 14 V3.8" fill="none" stroke="#fb5f6c" stroke-width="1.5"/><path d="M6.1 7.2 V12.4 M8.9 7.2 V12.4" stroke="#fb5f6c" stroke-width="1.4"/></svg>
<div style="position:absolute;left:420px;top:494px;width:15px;height:15px;border-radius:3px;background:#6e6e6e;color:#fff;font:700 10px/15px 'Liberation Sans',sans-serif;text-align:center">5</div>
<div style="position:absolute;left:458px;top:493.00px;font-size:15px;font-weight:400;color:#1b2434;letter-spacing:-0.600px;"><span>1.1.2.02.005</span></div>
<div style="position:absolute;left:612.5px;top:493.00px;font-size:15px;font-weight:400;color:#1b2434;letter-spacing:-0.600px;"><span>1647</span></div>
<div style="position:absolute;left:805px;top:493.00px;font-size:15px;font-weight:400;color:#1b2434;letter-spacing:0.701px;"><span>teste importação</span></div>
<div style="position:absolute;left:1375px;top:493.00px;font-size:15px;font-weight:400;color:#1b2434;"><span>D</span></div>
<div style="position:absolute;left:1403.5px;top:493.00px;font-size:15px;font-weight:400;color:#1b2434;"><span>A</span></div>
<div style="position:absolute;left:1426.5px;top:493.00px;font-size:15px;font-weight:400;color:#1b2434;"><span>DC</span></div>
<div style="position:absolute;left:287px;top:550px;width:1238px;height:1px;background:#d9d9d9"></div>
<div style="position:absolute;left:293px;top:525px;width:19px;height:19px;border:1.3px solid #a8a8a8;border-radius:3px;box-sizing:border-box;background:#fff"></div>
<div style="position:absolute;left:324px;top:527px;width:16px;height:15px;border-radius:3px;background:#10bd87;color:#fff;font:700 10.5px/15px 'Liberation Sans',sans-serif;text-align:center">A</div>
<svg style="position:absolute;left:354px;top:528px;" width="12" height="12" viewBox="0 0 12 12"><path d="M0 2 H12 M0 5.9 H12 M0 9.8 H12" stroke="#a6a6a6" stroke-width="2"/></svg>
<svg style="position:absolute;left:381px;top:525.5px;" width="15" height="18" viewBox="0 0 15 18"><path d="M1.2 3.6 H13.8" stroke="#fb5f6c" stroke-width="1.4" stroke-linecap="round"/><path d="M4.4 3.4 C4.6 1.8 5.8 1 7.5 1 C9.2 1 10.4 1.8 10.6 3.4" fill="none" stroke="#fb5f6c" stroke-width="1.4"/><path d="M2.9 3.8 V14 C2.9 15.5 3.9 16.3 5.2 16.3 H9.8 C11.1 16.3 12.1 15.5 12.1 14 V3.8" fill="none" stroke="#fb5f6c" stroke-width="1.5"/><path d="M6.1 7.2 V12.4 M8.9 7.2 V12.4" stroke="#fb5f6c" stroke-width="1.4"/></svg>
<div style="position:absolute;left:420px;top:527px;width:15px;height:15px;border-radius:3px;background:#6e6e6e;color:#fff;font:700 10px/15px 'Liberation Sans',sans-serif;text-align:center">5</div>
<div style="position:absolute;left:458px;top:526.00px;font-size:15px;font-weight:400;color:#1b2434;letter-spacing:-0.600px;"><span>1.1.2.02.007</span></div>
<div style="position:absolute;left:612.5px;top:526.00px;font-size:15px;font-weight:400;color:#1b2434;letter-spacing:-0.066px;"><span>864</span></div>
<div style="position:absolute;left:805px;top:527.00px;font-size:14px;font-weight:400;color:#1b2434;letter-spacing:-0.428px;"><span>BANCO STONE INSTITUIÇÃO</span></div>
<div style="position:absolute;left:1375px;top:526.00px;font-size:15px;font-weight:400;color:#1b2434;"><span>D</span></div>
<div style="position:absolute;left:1403.5px;top:526.00px;font-size:15px;font-weight:400;color:#1b2434;"><span>A</span></div>
<div style="position:absolute;left:1426.5px;top:526.00px;font-size:15px;font-weight:400;color:#1b2434;"><span>DC</span></div>
<div style="position:absolute;left:287px;top:583px;width:1238px;height:1px;background:#d9d9d9"></div>
<div style="position:absolute;left:293px;top:558px;width:19px;height:19px;border:1.3px solid #a8a8a8;border-radius:3px;box-sizing:border-box;background:#fff"></div>
<div style="position:absolute;left:324px;top:560px;width:16px;height:15px;border-radius:3px;background:#fdb92c;color:#fff;font:700 10.5px/15px 'Liberation Sans',sans-serif;text-align:center">I</div>
<svg style="position:absolute;left:354px;top:561px;" width="12" height="12" viewBox="0 0 12 12"><path d="M0 2 H12 M0 5.9 H12 M0 9.8 H12" stroke="#a6a6a6" stroke-width="2"/></svg>
<svg style="position:absolute;left:381px;top:558.5px;" width="15" height="18" viewBox="0 0 15 18"><path d="M1.2 3.6 H13.8" stroke="#fb5f6c" stroke-width="1.4" stroke-linecap="round"/><path d="M4.4 3.4 C4.6 1.8 5.8 1 7.5 1 C9.2 1 10.4 1.8 10.6 3.4" fill="none" stroke="#fb5f6c" stroke-width="1.4"/><path d="M2.9 3.8 V14 C2.9 15.5 3.9 16.3 5.2 16.3 H9.8 C11.1 16.3 12.1 15.5 12.1 14 V3.8" fill="none" stroke="#fb5f6c" stroke-width="1.5"/><path d="M6.1 7.2 V12.4 M8.9 7.2 V12.4" stroke="#fb5f6c" stroke-width="1.4"/></svg>
<div style="position:absolute;left:420px;top:560px;width:15px;height:15px;border-radius:3px;background:#6e6e6e;color:#fff;font:700 10px/15px 'Liberation Sans',sans-serif;text-align:center">5</div>
<div style="position:absolute;left:458px;top:559.00px;font-size:15px;font-weight:400;color:#1b2434;letter-spacing:-0.600px;"><span>1.1.2.02.010</span></div>
<div style="position:absolute;left:612.5px;top:559.00px;font-size:15px;font-weight:400;color:#1b2434;letter-spacing:-0.600px;"><span>1668</span></div>
<div style="position:absolute;left:805px;top:559.00px;font-size:15px;font-weight:400;color:#1b2434;letter-spacing:1.156px;"><span>batata</span></div>
<div style="position:absolute;left:1375px;top:559.00px;font-size:15px;font-weight:400;color:#1b2434;"><span>D</span></div>
<div style="position:absolute;left:1403.5px;top:559.00px;font-size:15px;font-weight:400;color:#1b2434;"><span>A</span></div>
<div style="position:absolute;left:1426.5px;top:559.00px;font-size:15px;font-weight:400;color:#1b2434;"><span>C</span></div>
<div style="position:absolute;left:287px;top:616px;width:1238px;height:1px;background:#d9d9d9"></div>
<div style="position:absolute;left:293px;top:591px;width:19px;height:19px;border:1.3px solid #a8a8a8;border-radius:3px;box-sizing:border-box;background:#fff"></div>
<div style="position:absolute;left:324px;top:593px;width:16px;height:15px;border-radius:3px;background:#fdb92c;color:#fff;font:700 10.5px/15px 'Liberation Sans',sans-serif;text-align:center">I</div>
<svg style="position:absolute;left:354px;top:594px;" width="12" height="12" viewBox="0 0 12 12"><path d="M0 2 H12 M0 5.9 H12 M0 9.8 H12" stroke="#a6a6a6" stroke-width="2"/></svg>
<svg style="position:absolute;left:381px;top:591.5px;" width="15" height="18" viewBox="0 0 15 18"><path d="M1.2 3.6 H13.8" stroke="#fb5f6c" stroke-width="1.4" stroke-linecap="round"/><path d="M4.4 3.4 C4.6 1.8 5.8 1 7.5 1 C9.2 1 10.4 1.8 10.6 3.4" fill="none" stroke="#fb5f6c" stroke-width="1.4"/><path d="M2.9 3.8 V14 C2.9 15.5 3.9 16.3 5.2 16.3 H9.8 C11.1 16.3 12.1 15.5 12.1 14 V3.8" fill="none" stroke="#fb5f6c" stroke-width="1.5"/><path d="M6.1 7.2 V12.4 M8.9 7.2 V12.4" stroke="#fb5f6c" stroke-width="1.4"/></svg>
<div style="position:absolute;left:420px;top:593px;width:15px;height:15px;border-radius:3px;background:#6e6e6e;color:#fff;font:700 10px/15px 'Liberation Sans',sans-serif;text-align:center">5</div>
<div style="position:absolute;left:458px;top:592.00px;font-size:15px;font-weight:400;color:#1b2434;letter-spacing:-0.600px;"><span>1.1.2.02.012</span></div>
<div style="position:absolute;left:612.5px;top:592.00px;font-size:15px;font-weight:400;color:#1b2434;letter-spacing:-0.066px;"><span>497</span></div>
<div style="position:absolute;left:805px;top:592.00px;font-size:15px;font-weight:400;color:#1b2434;letter-spacing:0.224px;"><span>Caixa teste Azevedo</span></div>
<div style="position:absolute;left:1375px;top:592.00px;font-size:15px;font-weight:400;color:#1b2434;"><span>D</span></div>
<div style="position:absolute;left:1403.5px;top:592.00px;font-size:15px;font-weight:400;color:#1b2434;"><span>A</span></div>
<div style="position:absolute;left:287px;top:649px;width:1238px;height:1px;background:#d9d9d9"></div>
<div style="position:absolute;left:293px;top:624px;width:19px;height:19px;border:1.3px solid #a8a8a8;border-radius:3px;box-sizing:border-box;background:#fff"></div>
<div style="position:absolute;left:324px;top:626px;width:16px;height:15px;border-radius:3px;background:#fdb92c;color:#fff;font:700 10.5px/15px 'Liberation Sans',sans-serif;text-align:center">I</div>
<svg style="position:absolute;left:354px;top:627px;" width="12" height="12" viewBox="0 0 12 12"><path d="M0 2 H12 M0 5.9 H12 M0 9.8 H12" stroke="#a6a6a6" stroke-width="2"/></svg>
<svg style="position:absolute;left:381px;top:624.5px;" width="15" height="18" viewBox="0 0 15 18"><path d="M1.2 3.6 H13.8" stroke="#fb5f6c" stroke-width="1.4" stroke-linecap="round"/><path d="M4.4 3.4 C4.6 1.8 5.8 1 7.5 1 C9.2 1 10.4 1.8 10.6 3.4" fill="none" stroke="#fb5f6c" stroke-width="1.4"/><path d="M2.9 3.8 V14 C2.9 15.5 3.9 16.3 5.2 16.3 H9.8 C11.1 16.3 12.1 15.5 12.1 14 V3.8" fill="none" stroke="#fb5f6c" stroke-width="1.5"/><path d="M6.1 7.2 V12.4 M8.9 7.2 V12.4" stroke="#fb5f6c" stroke-width="1.4"/></svg>
<div style="position:absolute;left:420px;top:626px;width:15px;height:15px;border-radius:3px;background:#6e6e6e;color:#fff;font:700 10px/15px 'Liberation Sans',sans-serif;text-align:center">5</div>
<div style="position:absolute;left:458px;top:625.00px;font-size:15px;font-weight:400;color:#1b2434;letter-spacing:-0.600px;"><span>1.1.2.02.013</span></div>
<div style="position:absolute;left:612.5px;top:625.00px;font-size:15px;font-weight:400;color:#1b2434;letter-spacing:-0.066px;"><span>600</span></div>
<div style="position:absolute;left:805px;top:625.00px;font-size:15px;font-weight:400;color:#1b2434;letter-spacing:0.604px;"><span>banco teste</span></div>
<div style="position:absolute;left:1375px;top:625.00px;font-size:15px;font-weight:400;color:#1b2434;"><span>D</span></div>
<div style="position:absolute;left:1403.5px;top:625.00px;font-size:15px;font-weight:400;color:#1b2434;"><span>A</span></div>
<div style="position:absolute;left:1426.5px;top:625.00px;font-size:15px;font-weight:400;color:#1b2434;"><span>DC</span></div>
<div style="position:absolute;left:287px;top:650px;width:1238px;height:32px;background:#fafafa"></div>
<div style="position:absolute;left:287px;top:682px;width:1238px;height:1px;background:#d9d9d9"></div>
<div style="position:absolute;left:293px;top:657px;width:19px;height:19px;border:1.3px solid #a8a8a8;border-radius:3px;box-sizing:border-box;background:#fff"></div>
<div style="position:absolute;left:324px;top:659px;width:16px;height:15px;border-radius:3px;background:#fdb92c;color:#fff;font:700 10.5px/15px 'Liberation Sans',sans-serif;text-align:center">I</div>
<svg style="position:absolute;left:354px;top:660px;" width="12" height="12" viewBox="0 0 12 12"><path d="M0 2 H12 M0 5.9 H12 M0 9.8 H12" stroke="#a6a6a6" stroke-width="2"/></svg>
<svg style="position:absolute;left:381px;top:657.5px;" width="15" height="18" viewBox="0 0 15 18"><path d="M1.2 3.6 H13.8" stroke="#fb5f6c" stroke-width="1.4" stroke-linecap="round"/><path d="M4.4 3.4 C4.6 1.8 5.8 1 7.5 1 C9.2 1 10.4 1.8 10.6 3.4" fill="none" stroke="#fb5f6c" stroke-width="1.4"/><path d="M2.9 3.8 V14 C2.9 15.5 3.9 16.3 5.2 16.3 H9.8 C11.1 16.3 12.1 15.5 12.1 14 V3.8" fill="none" stroke="#fb5f6c" stroke-width="1.5"/><path d="M6.1 7.2 V12.4 M8.9 7.2 V12.4" stroke="#fb5f6c" stroke-width="1.4"/></svg>
<div style="position:absolute;left:420px;top:659px;width:15px;height:15px;border-radius:3px;background:#6e6e6e;color:#fff;font:700 10px/15px 'Liberation Sans',sans-serif;text-align:center">5</div>
<div style="position:absolute;left:458px;top:658.00px;font-size:15px;font-weight:400;color:#1b2434;letter-spacing:-0.600px;"><span>1.1.2.02.123</span></div>
<div style="position:absolute;left:612.5px;top:658.00px;font-size:15px;font-weight:400;color:#1b2434;letter-spacing:-0.066px;"><span>527</span></div>
<div style="position:absolute;left:805px;top:658.00px;font-size:15px;font-weight:400;color:#1b2434;letter-spacing:0.517px;"><span>teste</span></div>
<div style="position:absolute;left:1375px;top:658.00px;font-size:15px;font-weight:400;color:#1b2434;"><span>D</span></div>
<div style="position:absolute;left:1403.5px;top:658.00px;font-size:15px;font-weight:400;color:#1b2434;"><span>A</span></div>
<div style="position:absolute;left:1426.5px;top:658.00px;font-size:15px;font-weight:400;color:#1b2434;"><span>DC</span></div>
<div style="position:absolute;left:287px;top:715px;width:1238px;height:1px;background:#d9d9d9"></div>
<div style="position:absolute;left:293px;top:690px;width:19px;height:19px;border:1.3px solid #a8a8a8;border-radius:3px;box-sizing:border-box;background:#fff"></div>
<div style="position:absolute;left:324px;top:692px;width:16px;height:15px;border-radius:3px;background:#10bd87;color:#fff;font:700 10.5px/15px 'Liberation Sans',sans-serif;text-align:center">A</div>
<svg style="position:absolute;left:354px;top:693px;" width="12" height="12" viewBox="0 0 12 12"><path d="M0 2 H12 M0 5.9 H12 M0 9.8 H12" stroke="#a6a6a6" stroke-width="2"/></svg>
<svg style="position:absolute;left:381px;top:690.5px;" width="15" height="18" viewBox="0 0 15 18"><path d="M1.2 3.6 H13.8" stroke="#fb5f6c" stroke-width="1.4" stroke-linecap="round"/><path d="M4.4 3.4 C4.6 1.8 5.8 1 7.5 1 C9.2 1 10.4 1.8 10.6 3.4" fill="none" stroke="#fb5f6c" stroke-width="1.4"/><path d="M2.9 3.8 V14 C2.9 15.5 3.9 16.3 5.2 16.3 H9.8 C11.1 16.3 12.1 15.5 12.1 14 V3.8" fill="none" stroke="#fb5f6c" stroke-width="1.5"/><path d="M6.1 7.2 V12.4 M8.9 7.2 V12.4" stroke="#fb5f6c" stroke-width="1.4"/></svg>
<div style="position:absolute;left:420px;top:692px;width:15px;height:15px;border-radius:3px;background:#fcb82e;color:#fff;font:700 10px/15px 'Liberation Sans',sans-serif;text-align:center">4</div>
<div style="position:absolute;left:458px;top:691.00px;font-size:15px;font-weight:700;color:#1b2434;letter-spacing:-0.338px;"><span>1.1.2.04.000</span></div>
<div style="position:absolute;left:612.5px;top:691.00px;font-size:15px;font-weight:700;color:#1b2434;"><span>6</span></div>
<div style="position:absolute;left:780px;top:692.00px;font-size:14px;font-weight:700;color:#1b2434;letter-spacing:0.069px;"><span>BANCOS CONTA MOVIMENTO</span></div>
<div style="position:absolute;left:1375px;top:691.00px;font-size:15px;font-weight:700;color:#1b2434;"><span>D</span></div>
<div style="position:absolute;left:1403.5px;top:691.00px;font-size:15px;font-weight:700;color:#1b2434;"><span>S</span></div>
<div style="position:absolute;left:1426.5px;top:691.00px;font-size:15px;font-weight:700;color:#1b2434;"><span>DC</span></div>
<div style="position:absolute;left:287px;top:748px;width:1238px;height:1px;background:#d9d9d9"></div>
<div style="position:absolute;left:293px;top:723px;width:19px;height:19px;border:1.3px solid #a8a8a8;border-radius:3px;box-sizing:border-box;background:#fff"></div>
<div style="position:absolute;left:324px;top:725px;width:16px;height:15px;border-radius:3px;background:#10bd87;color:#fff;font:700 10.5px/15px 'Liberation Sans',sans-serif;text-align:center">A</div>
<svg style="position:absolute;left:354px;top:726px;" width="12" height="12" viewBox="0 0 12 12"><path d="M0 2 H12 M0 5.9 H12 M0 9.8 H12" stroke="#a6a6a6" stroke-width="2"/></svg>
<svg style="position:absolute;left:381px;top:723.5px;" width="15" height="18" viewBox="0 0 15 18"><path d="M1.2 3.6 H13.8" stroke="#fb5f6c" stroke-width="1.4" stroke-linecap="round"/><path d="M4.4 3.4 C4.6 1.8 5.8 1 7.5 1 C9.2 1 10.4 1.8 10.6 3.4" fill="none" stroke="#fb5f6c" stroke-width="1.4"/><path d="M2.9 3.8 V14 C2.9 15.5 3.9 16.3 5.2 16.3 H9.8 C11.1 16.3 12.1 15.5 12.1 14 V3.8" fill="none" stroke="#fb5f6c" stroke-width="1.5"/><path d="M6.1 7.2 V12.4 M8.9 7.2 V12.4" stroke="#fb5f6c" stroke-width="1.4"/></svg>
<div style="position:absolute;left:420px;top:725px;width:15px;height:15px;border-radius:3px;background:#6e6e6e;color:#fff;font:700 10px/15px 'Liberation Sans',sans-serif;text-align:center">5</div>
<div style="position:absolute;left:458px;top:724.00px;font-size:15px;font-weight:400;color:#1b2434;letter-spacing:-0.600px;"><span>1.1.2.04.001</span></div>
<div style="position:absolute;left:612.5px;top:724.00px;font-size:15px;font-weight:400;color:#1b2434;letter-spacing:-0.600px;"><span>2016</span></div>
<div style="position:absolute;left:805px;top:724.00px;font-size:15px;font-weight:400;color:#1b2434;letter-spacing:0.205px;"><span>Banco do Brasil S/A - 02</span></div>
<div style="position:absolute;left:1375px;top:724.00px;font-size:15px;font-weight:400;color:#1b2434;"><span>D</span></div>
<div style="position:absolute;left:1403.5px;top:724.00px;font-size:15px;font-weight:400;color:#1b2434;"><span>A</span></div>
<div style="position:absolute;left:1426.5px;top:724.00px;font-size:15px;font-weight:400;color:#1b2434;"><span>DC</span></div>
<div style="position:absolute;left:287px;top:781px;width:1238px;height:1px;background:#d9d9d9"></div>
<div style="position:absolute;left:293px;top:756px;width:19px;height:19px;border:1.3px solid #a8a8a8;border-radius:3px;box-sizing:border-box;background:#fff"></div>
<div style="position:absolute;left:324px;top:758px;width:16px;height:15px;border-radius:3px;background:#10bd87;color:#fff;font:700 10.5px/15px 'Liberation Sans',sans-serif;text-align:center">A</div>
<svg style="position:absolute;left:354px;top:759px;" width="12" height="12" viewBox="0 0 12 12"><path d="M0 2 H12 M0 5.9 H12 M0 9.8 H12" stroke="#a6a6a6" stroke-width="2"/></svg>
<svg style="position:absolute;left:381px;top:756.5px;" width="15" height="18" viewBox="0 0 15 18"><path d="M1.2 3.6 H13.8" stroke="#fb5f6c" stroke-width="1.4" stroke-linecap="round"/><path d="M4.4 3.4 C4.6 1.8 5.8 1 7.5 1 C9.2 1 10.4 1.8 10.6 3.4" fill="none" stroke="#fb5f6c" stroke-width="1.4"/><path d="M2.9 3.8 V14 C2.9 15.5 3.9 16.3 5.2 16.3 H9.8 C11.1 16.3 12.1 15.5 12.1 14 V3.8" fill="none" stroke="#fb5f6c" stroke-width="1.5"/><path d="M6.1 7.2 V12.4 M8.9 7.2 V12.4" stroke="#fb5f6c" stroke-width="1.4"/></svg>
<div style="position:absolute;left:420px;top:758px;width:15px;height:15px;border-radius:3px;background:#6e6e6e;color:#fff;font:700 10px/15px 'Liberation Sans',sans-serif;text-align:center">5</div>
<div style="position:absolute;left:458px;top:757.00px;font-size:15px;font-weight:400;color:#1b2434;letter-spacing:-0.600px;"><span>1.1.2.04.002</span></div>
<div style="position:absolute;left:612.5px;top:757.00px;font-size:15px;font-weight:400;color:#1b2434;letter-spacing:-0.087px;"><span>34</span></div>
<div style="position:absolute;left:805px;top:757.00px;font-size:15px;font-weight:400;color:#1b2434;letter-spacing:0.228px;"><span>Banco Bradesco 2</span></div>
<div style="position:absolute;left:1375px;top:757.00px;font-size:15px;font-weight:400;color:#1b2434;"><span>D</span></div>
<div style="position:absolute;left:1403.5px;top:757.00px;font-size:15px;font-weight:400;color:#1b2434;"><span>A</span></div>
<div style="position:absolute;left:1426.5px;top:757.00px;font-size:15px;font-weight:400;color:#1b2434;"><span>DC</span></div>
<div style="position:absolute;left:287px;top:814px;width:1238px;height:1px;background:#d9d9d9"></div>
<div style="position:absolute;left:293px;top:789px;width:19px;height:19px;border:1.3px solid #a8a8a8;border-radius:3px;box-sizing:border-box;background:#fff"></div>
<div style="position:absolute;left:324px;top:791px;width:16px;height:15px;border-radius:3px;background:#10bd87;color:#fff;font:700 10.5px/15px 'Liberation Sans',sans-serif;text-align:center">A</div>
<svg style="position:absolute;left:354px;top:792px;" width="12" height="12" viewBox="0 0 12 12"><path d="M0 2 H12 M0 5.9 H12 M0 9.8 H12" stroke="#a6a6a6" stroke-width="2"/></svg>
<svg style="position:absolute;left:381px;top:789.5px;" width="15" height="18" viewBox="0 0 15 18"><path d="M1.2 3.6 H13.8" stroke="#fb5f6c" stroke-width="1.4" stroke-linecap="round"/><path d="M4.4 3.4 C4.6 1.8 5.8 1 7.5 1 C9.2 1 10.4 1.8 10.6 3.4" fill="none" stroke="#fb5f6c" stroke-width="1.4"/><path d="M2.9 3.8 V14 C2.9 15.5 3.9 16.3 5.2 16.3 H9.8 C11.1 16.3 12.1 15.5 12.1 14 V3.8" fill="none" stroke="#fb5f6c" stroke-width="1.5"/><path d="M6.1 7.2 V12.4 M8.9 7.2 V12.4" stroke="#fb5f6c" stroke-width="1.4"/></svg>
<div style="position:absolute;left:420px;top:791px;width:15px;height:15px;border-radius:3px;background:#6e6e6e;color:#fff;font:700 10px/15px 'Liberation Sans',sans-serif;text-align:center">5</div>
<div style="position:absolute;left:458px;top:790.00px;font-size:15px;font-weight:400;color:#1b2434;letter-spacing:-0.600px;"><span>1.1.2.04.003</span></div>
<div style="position:absolute;left:612.5px;top:790.00px;font-size:15px;font-weight:400;color:#1b2434;letter-spacing:-0.087px;"><span>47</span></div>
<div style="position:absolute;left:805px;top:790.00px;font-size:15px;font-weight:400;color:#1b2434;letter-spacing:-0.353px;"><span>Banco HSBC</span></div>
<div style="position:absolute;left:1375px;top:790.00px;font-size:15px;font-weight:400;color:#1b2434;"><span>D</span></div>
<div style="position:absolute;left:1403.5px;top:790.00px;font-size:15px;font-weight:400;color:#1b2434;"><span>A</span></div>
<div style="position:absolute;left:1426.5px;top:790.00px;font-size:15px;font-weight:400;color:#1b2434;"><span>DC</span></div>
<div style="position:absolute;left:287px;top:847px;width:1238px;height:1px;background:#d9d9d9"></div>
<div style="position:absolute;left:293px;top:822px;width:19px;height:19px;border:1.3px solid #a8a8a8;border-radius:3px;box-sizing:border-box;background:#fff"></div>
<div style="position:absolute;left:324px;top:824px;width:16px;height:15px;border-radius:3px;background:#10bd87;color:#fff;font:700 10.5px/15px 'Liberation Sans',sans-serif;text-align:center">A</div>
<svg style="position:absolute;left:354px;top:825px;" width="12" height="12" viewBox="0 0 12 12"><path d="M0 2 H12 M0 5.9 H12 M0 9.8 H12" stroke="#a6a6a6" stroke-width="2"/></svg>
<svg style="position:absolute;left:381px;top:822.5px;" width="15" height="18" viewBox="0 0 15 18"><path d="M1.2 3.6 H13.8" stroke="#fb5f6c" stroke-width="1.4" stroke-linecap="round"/><path d="M4.4 3.4 C4.6 1.8 5.8 1 7.5 1 C9.2 1 10.4 1.8 10.6 3.4" fill="none" stroke="#fb5f6c" stroke-width="1.4"/><path d="M2.9 3.8 V14 C2.9 15.5 3.9 16.3 5.2 16.3 H9.8 C11.1 16.3 12.1 15.5 12.1 14 V3.8" fill="none" stroke="#fb5f6c" stroke-width="1.5"/><path d="M6.1 7.2 V12.4 M8.9 7.2 V12.4" stroke="#fb5f6c" stroke-width="1.4"/></svg>
<div style="position:absolute;left:420px;top:824px;width:15px;height:15px;border-radius:3px;background:#6e6e6e;color:#fff;font:700 10px/15px 'Liberation Sans',sans-serif;text-align:center">5</div>
<div style="position:absolute;left:458px;top:823.00px;font-size:15px;font-weight:400;color:#1b2434;letter-spacing:-0.600px;"><span>1.1.2.04.004</span></div>
<div style="position:absolute;left:612.5px;top:823.00px;font-size:15px;font-weight:400;color:#1b2434;letter-spacing:-0.600px;"><span>281</span></div>
<div style="position:absolute;left:805px;top:823.00px;font-size:15px;font-weight:400;color:#1b2434;letter-spacing:-0.081px;"><span>Banco HSBC - 2</span></div>
<div style="position:absolute;left:1375px;top:823.00px;font-size:15px;font-weight:400;color:#1b2434;"><span>D</span></div>
<div style="position:absolute;left:1403.5px;top:823.00px;font-size:15px;font-weight:400;color:#1b2434;"><span>A</span></div>
<div style="position:absolute;left:1426.5px;top:823.00px;font-size:15px;font-weight:400;color:#1b2434;"><span>DC</span></div>
<div style="position:absolute;left:782px;top:348px;width:130px;height:40px;border:3px solid #fe0000;box-sizing:border-box;border-radius:3px"></div>
<div style="position:absolute;left:1525px;top:221px;width:7px;height:626px;background:#f0f0f2"></div>
<div style="position:absolute;left:1525px;top:222px;width:6px;height:394px;background:#c9c9cd;border-radius:3px"></div>
<div style="position:absolute;left:293.6px;top:870.50px;font-size:15px;font-weight:400;color:#1b2434;letter-spacing:0.409px;"><span>30 / Página</span></div>
<svg style="position:absolute;left:386px;top:873px;" width="14" height="10" viewBox="0 0 14 10"><path d="M1.5 2 L7 7.5 L12.5 2" fill="none" stroke="#444" stroke-width="1.6" stroke-linecap="round"/></svg>
<svg style="position:absolute;left:420px;top:871px;" width="17" height="13" viewBox="0 0 17 13"><path d="M7 1.5 L2 6.5 L7 11.5 M14 1.5 L9 6.5 L14 11.5" fill="none" stroke="#b9b9b9" stroke-width="1.4" stroke-linecap="round"/></svg>
<svg style="position:absolute;left:457px;top:871px;" width="10" height="13" viewBox="0 0 10 13"><path d="M7.5 1.5 L2.5 6.5 L7.5 11.5" fill="none" stroke="#b9b9b9" stroke-width="1.4" stroke-linecap="round"/></svg>
<div style="position:absolute;left:480px;top:867px;width:60px;height:22px;border:1px solid #cfd3d8;border-radius:11px;box-sizing:border-box;background:#fff"></div>
<div style="position:absolute;left:506px;top:870.00px;font-size:15px;font-weight:400;color:#1b2434;"><span>1</span></div>
<div style="position:absolute;left:547.8px;top:871.00px;font-size:15px;font-weight:400;color:#1b2434;letter-spacing:-0.844px;"><span>/ 31</span></div>
<svg style="position:absolute;left:583px;top:871px;" width="10" height="13" viewBox="0 0 10 13"><path d="M2.5 1.5 L7.5 6.5 L2.5 11.5" fill="none" stroke="#555" stroke-width="1.4" stroke-linecap="round"/></svg>
<svg style="position:absolute;left:614px;top:871px;" width="17" height="13" viewBox="0 0 17 13"><path d="M2 1.5 L7 6.5 L2 11.5 M9 1.5 L14 6.5 L9 11.5" fill="none" stroke="#555" stroke-width="1.4" stroke-linecap="round"/></svg>
<div style="position:absolute;left:641.8px;top:871.00px;font-size:15px;font-weight:400;color:#1b2434;letter-spacing:0.120px;"><span>925 Registros</span></div>
<svg style="position:absolute;left:1484px;top:855px;" width="46" height="46" viewBox="0 0 46 46"><defs><clipPath id="avc"><path d="M2.5 43.5 V22.5 C2.5 11.3 11.6 2.2 22.5 2.2 C33.6 2.2 42.7 11.3 42.7 22.5 C42.7 33.6 33.6 43.5 22.5 43.5 Z"/></clipPath></defs><g clip-path="url(#avc)"><rect width="46" height="46" fill="#c3e2fa"/><path d="M9 46 C9 30 9.5 10 23 8.5 C35 9.5 37 28 37 46 Z" fill="#4e342a"/><ellipse cx="22.5" cy="23.5" rx="8.2" ry="10.5" fill="#e3b49c"/><path d="M14 15 C17 11 27 10.5 31 16 C27 14 19 13.5 14 15 Z" fill="#4e342a"/><path d="M5 46 C7 38.5 13 36 22.5 36 C32 36 38 38.5 40 46 Z" fill="#e6e2e0"/><circle cx="18.3" cy="22" r="3.2" fill="none" stroke="#5a5a5a" stroke-width="1.3"/><circle cx="26.8" cy="22" r="3.2" fill="none" stroke="#5a5a5a" stroke-width="1.3"/><path d="M21.5 21.6 H23.6" stroke="#5a5a5a" stroke-width="1.1"/><path d="M19 28.3 C21 30.2 24 30.2 26 28.3 Z" fill="#fff" stroke="#c2413b" stroke-width="1.1"/></g><path d="M2.5 43.5 V22.5 C2.5 11.3 11.6 2.2 22.5 2.2 C33.6 2.2 42.7 11.3 42.7 22.5 C42.7 33.6 33.6 43.5 22.5 43.5 Z" fill="none" stroke="#1f7ef0" stroke-width="2.2"/></svg>
<svg style="position:absolute;left:1532px;top:898px;" width="10" height="10" viewBox="0 0 10 10"><path d="M10 2 C8.5 6 6 8.5 2 10 H10 Z" fill="#4cc4bf"/></svg>
<svg style="position:absolute;left:1538px;top:0px;" width="4" height="6" viewBox="0 0 4 6"><path d="M4 0 V5 C2.5 4 1.5 2.5 1 0 Z" fill="#4cc4bf"/></svg>
<svg style="position:absolute;left:0px;top:902px;" width="6" height="6" viewBox="0 0 6 6"><path d="M0 1.5 C2 2.5 3.5 4 5 6 H0 Z" fill="#4cc4bf"/></svg>
</body></html>
